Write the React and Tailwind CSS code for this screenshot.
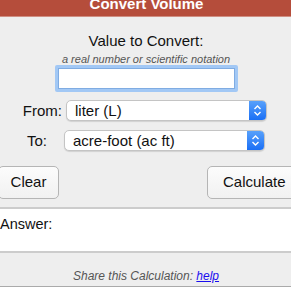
import React from "react";

function Chevrons() {
  return (
    <svg width="9" height="13" viewBox="0 0 9 13" fill="none" stroke="white" strokeWidth="1.4">
      <path d="M1.5 5 L4.5 2 L7.5 5" />
      <path d="M1.5 8 L4.5 11 L7.5 8" />
    </svg>
  );
}

function Select({ text, className }) {
  return (
    <div className={"flex h-[21px] rounded-[5px] border border-[#c4c4c4] bg-white shadow-[0_1px_1px_rgba(0,0,0,0.12)] overflow-hidden " + className}>
      <div className="flex-1 pl-[8px] text-[15px] leading-[19px] text-[#111]">{text}</div>
      <div className="w-[17px] flex items-center justify-center bg-gradient-to-b from-[#57a0fb] to-[#1a6ff5]">
        <Chevrons />
      </div>
    </div>
  );
}

export default function App() {
  return (
    <div
      className="w-[291px] h-[291px] overflow-hidden bg-[#eeeeee] text-[#111]"
      style={{ fontFamily: '"Liberation Sans", Arial, sans-serif' }}
    >
      <div className="h-[17px] bg-[#b54d3b] border-b border-[#cf8e82] overflow-hidden flex justify-center">
        <div className="text-white font-bold text-[15px] leading-[18px] mt-[-5px] ml-[2px]">Convert Volume</div>
      </div>

      <div className="flex flex-col items-center">
        <div className="mt-[14px] text-[15px] leading-[20px] ml-[1px]">Value to Convert:</div>
        <div className="mt-[1px] text-[11px] leading-[14px] italic text-[#555] ml-[1px]">a real number or scientific notation</div>
      </div>
      <div className="ml-[55px] mt-[-1px] w-[183px] h-[27px] rounded-[2px] bg-[#a2c8f5] p-[3px]">
        <div className="w-full h-full bg-white border border-[#80ace2]"></div>
      </div>

      <div className="flex items-center mt-[8px]">
        <div className="w-[63px] pr-[1px] text-right text-[15px] leading-[20px]">From:</div>
        <Select text="liter (L)" className="ml-[3px] w-[201px]" />
      </div>
      <div className="flex items-center mt-[9px]">
        <div className="ml-[27px] text-[15px] leading-[20px]">To:</div>
        <Select text="acre-foot (ac ft)" className="ml-[17px] w-[201px]" />
      </div>

      <div className="flex justify-between mt-[15px] h-[33px]">
        <div className="ml-[-2px] w-[61px] rounded-[5px] border border-[#b5b5b5] bg-gradient-to-b from-[#fcfcfc] to-[#f1f1f1] flex items-center justify-center text-[15px]">
          Clear
        </div>
        <div className="mr-[-8px] w-[92px] rounded-[5px] border border-[#b5b5b5] bg-gradient-to-b from-[#fcfcfc] to-[#f1f1f1] flex items-center pl-[15px] text-[15px]">
          Calculate
        </div>
      </div>

      <div className="mt-[8px] h-[46px] ml-[-4px] mr-[-4px] bg-white border-y-2 border-[#cccccc]">
        <div className="ml-[4px] mt-[5px] text-[14.5px] leading-[20px]">Answer:</div>
      </div>

      <div className="mt-[16px] text-center text-[12px] leading-[14px] italic text-[#555] ml-[1px]">
        Share this Calculation: <span className="text-[#1a0dee] underline">help</span>
      </div>
      <div className="mt-[3px] ml-[-2px] mr-[-2px] h-[20px] bg-white border-t border-[#aaaaaa] overflow-hidden">
        <div className="ml-[2px] text-[13px] leading-[15px] text-[#777] mt-[1px]">Do a calculation then copy the link from here</div>
      </div>
    </div>
  );
}
